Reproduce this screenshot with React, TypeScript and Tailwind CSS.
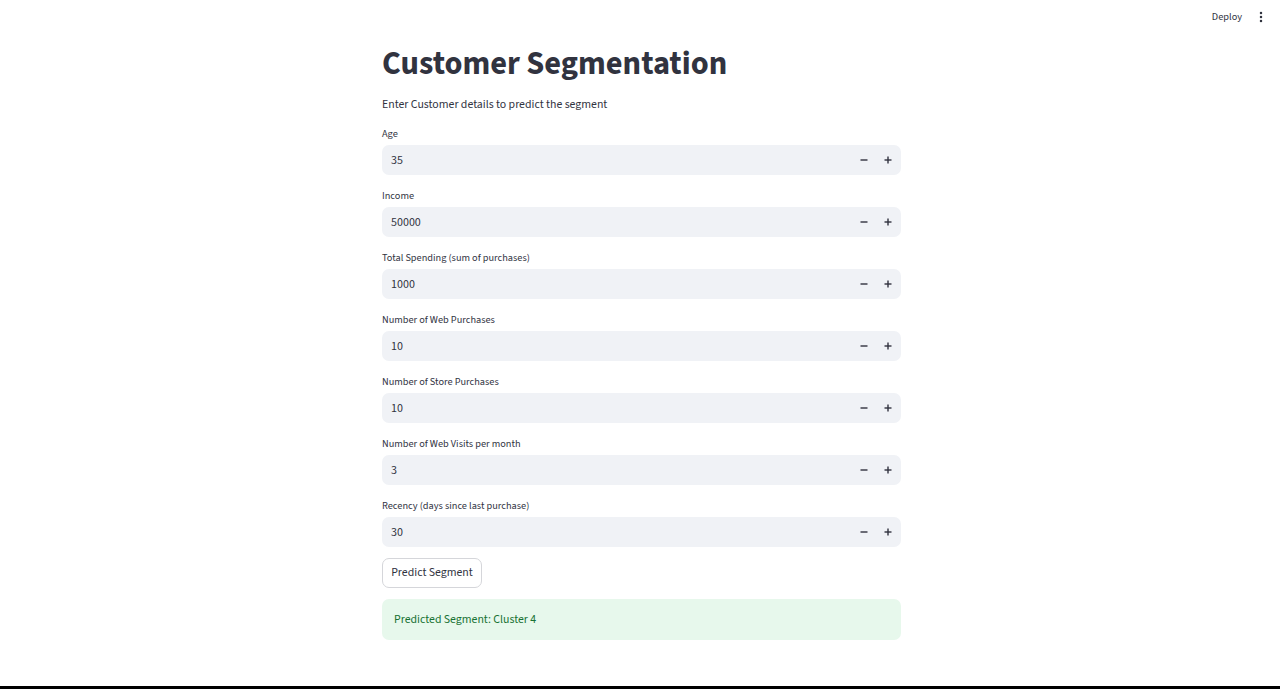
import React from "react";

const fields = [
  { label: "Age", value: "35" },
  { label: "Income", value: "50000" },
  { label: "Total Spending (sum of purchases)", value: "1000" },
  { label: "Number of Web Purchases", value: "10" },
  { label: "Number of Store Purchases", value: "10" },
  { label: "Number of Web Visits per month", value: "3" },
  { label: "Recency (days since last purchase)", value: "30" },
];

function NumberInput({ label, value }: { label: string; value: string }) {
  return (
    <div className="flex flex-col">
      <label className="mb-[4px] text-[10.3px] leading-[14px] text-[#31333f]">{label}</label>
      <div className="flex h-[30px] items-center rounded-[7px] bg-[#f0f2f6]">
        <span className="flex-1 pl-[9px] pt-[1px] text-[12px] text-[#31333f]">{value}</span>
        <button className="flex h-full w-[24px] items-center justify-center">
          <svg width="10" height="10" viewBox="0 0 10 10">
            <rect x="1.5" y="4.3" width="7" height="1.4" fill="#31333f" />
          </svg>
        </button>
        <button className="mr-[1px] flex h-full w-[24px] items-center justify-center">
          <svg width="10" height="10" viewBox="0 0 10 10">
            <rect x="1.5" y="4.3" width="7" height="1.4" fill="#31333f" />
            <rect x="4.3" y="1.5" width="1.4" height="7" fill="#31333f" />
          </svg>
        </button>
      </div>
    </div>
  );
}

export default function App() {
  return (
    <div className="relative h-[689px] overflow-hidden bg-white font-['Source_Sans_3','Lato',sans-serif] text-[#31333f]">
      <header className="absolute right-0 top-0 flex h-[34px] items-center pr-[17px]">
        <span className="mr-[17px] text-[10.3px]">Deploy</span>
        <svg width="4" height="12" viewBox="0 0 4 12">
          <circle cx="2" cy="2" r="1.25" fill="#31333f" />
          <circle cx="2" cy="6" r="1.25" fill="#31333f" />
          <circle cx="2" cy="10" r="1.25" fill="#31333f" />
        </svg>
      </header>
      <div className="flex justify-center pl-[3px]">
        <main className="w-[519px] pt-[45px]">
          <h1 className="text-[32.4px] font-bold leading-[39px]">Customer Segmentation</h1>
          <p className="mt-[12px] text-[11.8px] leading-[18px]">Enter Customer details to predict the segment</p>
          <div className="mt-[13px] flex flex-col gap-[14px]">
            {fields.map((f) => (
              <NumberInput key={f.label} label={f.label} value={f.value} />
            ))}
          </div>
          <button className="mt-[11px] h-[30px] w-[100px] rounded-[7px] border border-[#d5d6da] bg-white text-[11.8px]">
            Predict Segment
          </button>
          <div className="mt-[11px] flex h-[41px] items-center rounded-[7px] bg-[#e7f8ec] px-[12px] text-[11.8px] text-[#177233]">
            Predicted Segment: Cluster 4
          </div>
        </main>
      </div>
      <div className="absolute bottom-0 left-0 h-[3px] w-full bg-black" />
    </div>
  );
}
